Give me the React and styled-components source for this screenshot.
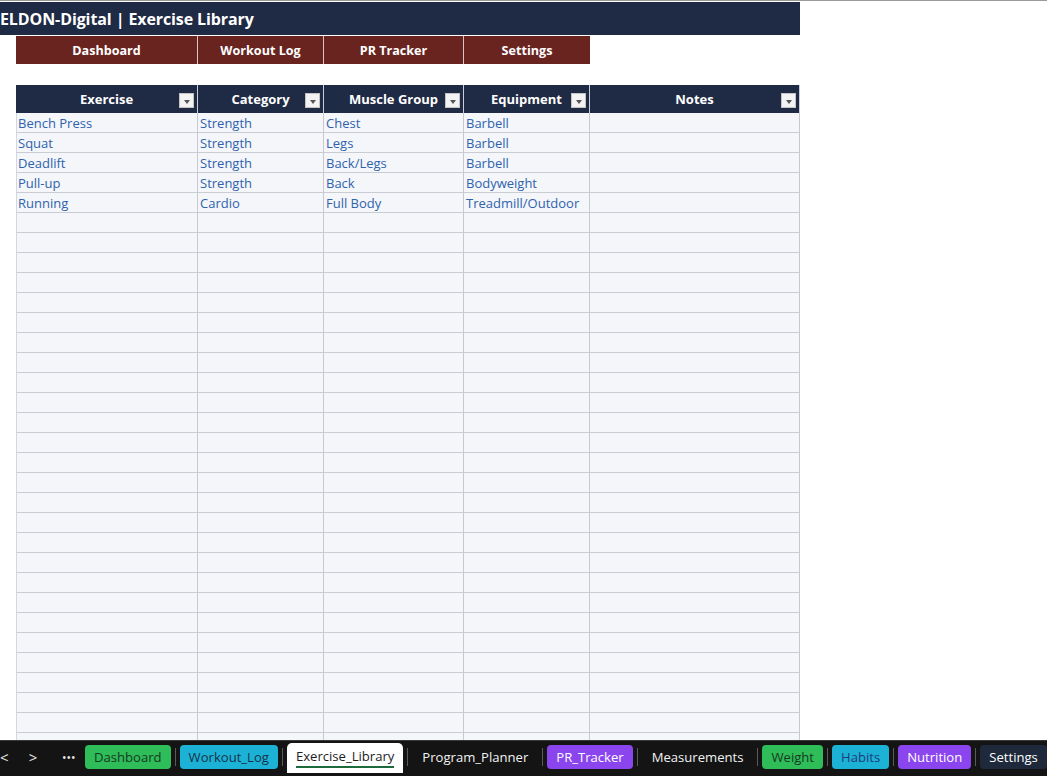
import React from "react"
import styled, { createGlobalStyle } from "styled-components"

const GlobalStyle = createGlobalStyle`
  html, body {
    margin: 0;
    padding: 0;
    background: #ffffff;
    overflow: hidden;
  }
  body {
    font-family: "Open Sans", "Noto Sans", sans-serif;
  }
`

const Page = styled.div`
  position: relative;
  width: 1047px;
  height: 776px;
  display: flex;
  flex-direction: column;
  overflow: hidden;
  background: #ffffff;
`

const Sheet = styled.div`
  flex: 1;
  overflow: hidden;
  border-top: 1px solid #9a9a9a;
  padding-top: 1px;
`

const TitleBar = styled.div`
  width: 800px;
  height: 33px;
  background: #1f2a44;
  color: #ffffff;
  font-weight: 700;
  font-size: 16px;
  line-height: 34px;
  white-space: nowrap;
  overflow: hidden;
  letter-spacing: -0.1px;
`

const NavRow = styled.div`
  display: grid;
  grid-template-columns: 182px 126px 140px 126px;
  margin-left: 16px;
  height: 28px;
  margin-top: 1px;
`

const NavButton = styled.div`
  background: #6a2420;
  color: #ffffff;
  font-weight: 700;
  font-size: 12.6px;
  display: flex;
  align-items: center;
  justify-content: center;
  border-right: 1px solid #d8c4c2;
  &:last-child { border-right: none; }
`

const Table = styled.div`
  margin-top: 21px;
  margin-left: 16px;
  width: 784px;
  display: grid;
  grid-template-columns: 182px 126px 140px 126px 210px;
`

const HeadCell = styled.div`
  position: relative;
  height: 28px;
  background: #1f2a44;
  color: #ffffff;
  font-weight: 700;
  font-size: 13px;
  display: flex;
  align-items: center;
  justify-content: center;
  border-right: 1px solid #c9ced8;
  box-sizing: border-box;
  &:last-child { border-right: none; }
`

const FilterBtn = styled.span`
  position: absolute;
  right: 3px;
  top: 8px;
  width: 15px;
  height: 15px;
  background: #f3f3f3;
  border: 1px solid #c4c4c4;
  box-sizing: border-box;
  display: flex;
  align-items: center;
  justify-content: center;
  &::after {
    content: "";
    border-left: 3.5px solid transparent;
    border-right: 3.5px solid transparent;
    border-top: 4px solid #555;
    margin-top: 2px;
  }
`

const Cell = styled.div`
  height: 20px;
  box-sizing: border-box;
  background: #f4f6fa;
  border-bottom: 1px solid #c9ccd3;
  border-right: 1px solid #c6c9d0;
  color: #2f62ad;
  font-size: 13px;
  line-height: 21px;
  padding-left: 2px;
  white-space: nowrap;
  overflow: hidden;
  &:nth-child(5n + 1) { border-left: 1px solid #d4d7dd; padding-left: 1px; }
`

const TabBar = styled.div`
  height: 36px;
  background: #141414;
  display: flex;
  align-items: center;
  padding-bottom: 3px;
  border-top: 1px solid #3a3a3a;
  box-sizing: border-box;
  font-family: "Open Sans", "Noto Sans", sans-serif;
  font-size: 13.1px;
`

const Arrow = styled.span`
  color: #e6e6e6;
  font-size: ${({ fs }) => fs || 14}px;
  width: ${({ w }) => w}px;
  text-align: center;
  flex: none;
`

const Tab = styled.div`
  height: 24px;
  padding: 0 ${({ bg }) => (bg ? 9 : 10)}px;
  border-radius: 4px;
  display: flex;
  align-items: center;
  white-space: nowrap;
  flex: none;
  background: ${({ bg }) => bg || "transparent"};
  color: ${({ fg }) => fg || "#f2f2f2"};
`

const ActiveTab = styled.div`
  height: 30px;
  margin-top: 2px;
  padding: 0 9px;
  background: #ffffff;
  color: #1d1d1d;
  border-radius: 5px 5px 0 0;
  display: flex;
  align-items: center;
  flex: none;
  span {
    border-bottom: 2px solid #1d6b3d;
    line-height: 20px;
    margin-top: -3px;
  }
`

const Sep = styled.span`
  width: 1px;
  height: 18px;
  background: #5a5a5a;
  margin: 0 4px;
  flex: none;
`

const headers = ["Exercise", "Category", "Muscle Group", "Equipment", "Notes"]

const rows = [
  ["Bench Press", "Strength", "Chest", "Barbell", ""],
  ["Squat", "Strength", "Legs", "Barbell", ""],
  ["Deadlift", "Strength", "Back/Legs", "Barbell", ""],
  ["Pull-up", "Strength", "Back", "Bodyweight", ""],
  ["Running", "Cardio", "Full Body", "Treadmill/Outdoor", ""],
]

const allRows = [...rows, ...Array.from({ length: 27 }, () => ["", "", "", "", ""])]

const tabs = [
  { name: "Dashboard", bg: "#2ebd59", fg: "#173a22" },
  { name: "Workout_Log", bg: "#1cb2d6", fg: "#16324a" },
  { name: "Exercise_Library", active: true },
  { name: "Program_Planner" },
  { name: "PR_Tracker", bg: "#8b45ee", fg: "#ffffff" },
  { name: "Measurements" },
  { name: "Weight", bg: "#2ebd59", fg: "#173a22" },
  { name: "Habits", bg: "#1cb2d6", fg: "#1e3c7a" },
  { name: "Nutrition", bg: "#8b45ee", fg: "#ffffff" },
  { name: "Settings", bg: "#1e293b", fg: "#ffffff" },
]

export default function App() {
  return (
    <Page>
      <GlobalStyle />
      <Sheet>
        <TitleBar>ELDON-Digital | Exercise Library</TitleBar>
        <NavRow>
          <NavButton>Dashboard</NavButton>
          <NavButton>Workout Log</NavButton>
          <NavButton>PR Tracker</NavButton>
          <NavButton>Settings</NavButton>
        </NavRow>
        <Table>
          {headers.map((h) => (
            <HeadCell key={h}>
              {h}
              <FilterBtn />
            </HeadCell>
          ))}
          {allRows.map((r, i) =>
            r.map((c, j) => <Cell key={`${i}-${j}`}>{c}</Cell>)
          )}
        </Table>
      </Sheet>
      <TabBar>
        <Arrow w={4} fs={15}>&lt;</Arrow>
        <Arrow w={58} fs={15}>&gt;</Arrow>
        <Arrow w={4} fs={12}>•••</Arrow>
        <span style={{ width: 19, flex: "none" }} />
        {tabs.map((t, i) => (
          <React.Fragment key={t.name}>
            {i > 0 && <Sep />}
            {t.active ? (
              <ActiveTab><span>{t.name}</span></ActiveTab>
            ) : (
              <Tab bg={t.bg} fg={t.fg}>{t.name}</Tab>
            )}
          </React.Fragment>
        ))}
      </TabBar>
    </Page>
  )
}
